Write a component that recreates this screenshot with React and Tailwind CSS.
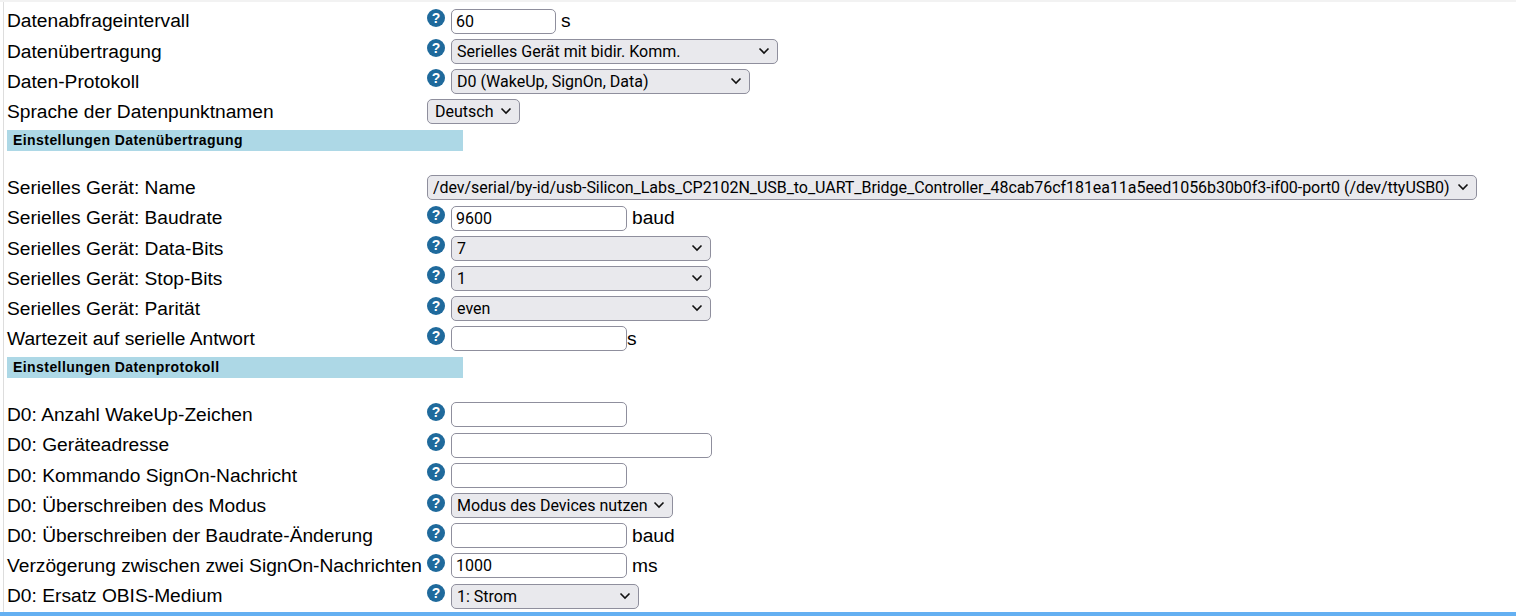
const sans = { fontFamily: '"Liberation Sans", Arial, sans-serif' };

function HelpIcon() {
  return (
    <span className="flex h-[18px] w-[18px] shrink-0 -translate-y-[3px] items-center justify-center rounded-full bg-[#1f6a9c] text-[14px] leading-none font-bold text-white">
      ?
    </span>
  );
}

function Select({ value, className, textClass = "" }) {
  return (
    <div className={`relative h-[25px] ${className}`}>
      <select
        defaultValue={value}
        className={`h-full w-full appearance-none rounded-[5px] border border-[#8f8f9d] bg-[#e9e9ed] pl-[5px] text-[16px] text-black [font-family:Roboto,sans-serif] outline-none ${textClass}`}
      >
        <option>{value}</option>
      </select>
      <svg
        className="pointer-events-none absolute top-[8px] right-[8px]"
        width="12"
        height="8"
        viewBox="0 0 12 8"
        fill="none"
        stroke="#111"
        strokeWidth="1.6"
      >
        <path d="M1.5 1.5 6 6l4.5-4.5" />
      </svg>
    </div>
  );
}

function Input({ value = "", className }) {
  return (
    <input
      defaultValue={value}
      className={`h-[25px] rounded-[5px] border border-[#8f8f9d] bg-white px-[4px] text-[16px] text-black [font-family:Roboto,sans-serif] outline-none ${className}`}
    />
  );
}

function Row({ label, help = true, unit, unitClass = "ml-[5px]", children }) {
  return (
    <div className="flex h-[30.2px] items-center">
      <div className="w-[420px] shrink-0 pt-[1.4px] text-[19.2px] whitespace-nowrap text-black">{label}</div>
      {help && <HelpIcon />}
      <div className={`flex items-center ${help ? "ml-[6px]" : ""}`}>
        {children}
        {unit && <span className={`${unitClass} pt-[1.4px] text-[19.2px] text-black`}>{unit}</span>}
      </div>
    </div>
  );
}

function SectionHeader({ title }) {
  return (
    <div className="mt-[3px] mb-[22px] flex h-[21px] w-[456px] items-center bg-[#add8e6] pl-[6px] text-[14px] font-bold tracking-[0.43px] text-black">
      {title}
    </div>
  );
}

export default function App() {
  return (
    <div className="h-[616px] w-[1516px] overflow-hidden bg-white" style={sans}>
      <div className="flex h-[612px] flex-col border-t-[2px] border-[#f2f2f2]">
        <div className="ml-[3px] h-full border-l border-[#dddddd] pt-[4px] pl-[3px]">
          <Row label="Datenabfrageintervall" unit="s">
            <Input value="60" className="w-[105px]" />
          </Row>
          <Row label="Datenübertragung">
            <Select value="Serielles Gerät mit bidir. Komm." className="w-[327px]" />
          </Row>
          <Row label="Daten-Protokoll">
            <Select value="D0 (WakeUp, SignOn, Data)" className="w-[299px]" />
          </Row>
          <Row label="Sprache der Datenpunktnamen" help={false}>
            <Select value="Deutsch" className="w-[93px]" textClass="pl-[7px]" />
          </Row>
          <SectionHeader title="Einstellungen Datenübertragung" />
          <Row label="Serielles Gerät: Name" help={false}>
            <Select
              value="/dev/serial/by-id/usb-Silicon_Labs_CP2102N_USB_to_UART_Bridge_Controller_48cab76cf181ea11a5eed1056b30b0f3-if00-port0 (/dev/ttyUSB0)"
              className="w-[1050px]"
              textClass="tracking-[-0.05px]"
            />
          </Row>
          <Row label="Serielles Gerät: Baudrate" unit="baud">
            <Input value="9600" className="w-[176px]" />
          </Row>
          <Row label="Serielles Gerät: Data-Bits">
            <Select value="7" className="w-[260px]" />
          </Row>
          <Row label="Serielles Gerät: Stop-Bits">
            <Select value="1" className="w-[260px]" />
          </Row>
          <Row label="Serielles Gerät: Parität">
            <Select value="even" className="w-[260px]" />
          </Row>
          <Row label="Wartezeit auf serielle Antwort" unit="s" unitClass="ml-0">
            <Input className="w-[176px]" />
          </Row>
          <SectionHeader title="Einstellungen Datenprotokoll" />
          <Row label="D0: Anzahl WakeUp-Zeichen">
            <Input className="w-[176px]" />
          </Row>
          <Row label="D0: Geräteadresse">
            <Input className="w-[261px]" />
          </Row>
          <Row label="D0: Kommando SignOn-Nachricht">
            <Input className="w-[176px]" />
          </Row>
          <Row label="D0: Überschreiben des Modus">
            <Select value="Modus des Devices nutzen" className="w-[222px]" />
          </Row>
          <Row label="D0: Überschreiben der Baudrate-Änderung" unit="baud">
            <Input className="w-[176px]" />
          </Row>
          <Row label="Verzögerung zwischen zwei SignOn-Nachrichten" unit="ms">
            <Input value="1000" className="w-[176px]" />
          </Row>
          <Row label="D0: Ersatz OBIS-Medium">
            <Select value="1: Strom" className="w-[188px]" />
          </Row>
        </div>
      </div>
      <div className="h-[4px] bg-[#64b0f2]" />
    </div>
  );
}
